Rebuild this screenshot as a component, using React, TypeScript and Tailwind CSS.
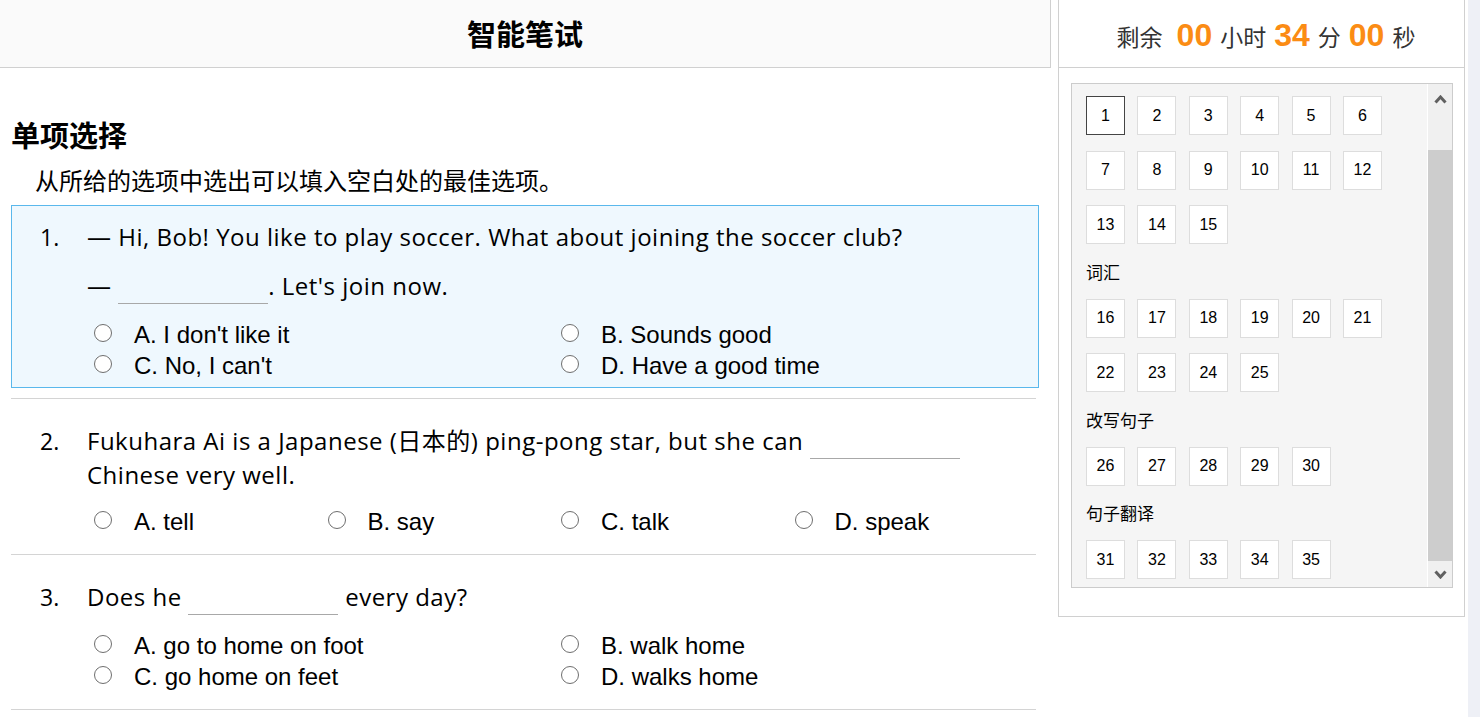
import React from "react";

type Opt = { label: string };

function Blank() {
  return <span className="relative top-[9px] inline-block w-[150px] h-px bg-[#a8a8a8]" />;
}

function Radio() {
  return <span className="inline-block w-[18px] h-[18px] mb-[3px] mr-[22px] shrink-0 rounded-full border border-[#6e6e6e] bg-white" />;
}

function Question({
  n,
  active,
  cols,
  options,
  optionsGap,
  children,
}: {
  n: number;
  active?: boolean;
  cols: 2 | 4;
  options: Opt[];
  optionsGap: string;
  children: React.ReactNode;
}) {
  return (
    <>
      <div
        className={
          active
            ? "border border-[#5ab8ec] bg-[#eff8fe] pl-[28px] pt-[14px] pb-[6px]"
            : "border border-transparent pl-[28px] pt-[14px] pb-[6px]"
        }
      >
        <div className="flex">
          <div className="w-[47px] shrink-0 text-[23px] leading-[34px] text-black font-['Open_Sans','Noto_Sans_CJK_SC',sans-serif]">
            {n}.
          </div>
          <div className="flex-1">
            <div className="text-[24px] leading-[34px] tracking-[0.5px] text-black font-['Open_Sans','Noto_Sans_CJK_SC',sans-serif]">
              {children}
            </div>
            <div
              className={
                (cols === 2 ? "grid grid-cols-2 " : "grid grid-cols-4 ") +
                optionsGap +
                " ml-[7px] w-[934px] font-['Liberation_Sans',Arial,sans-serif] text-[24px] leading-[31px] text-black"
              }
            >
              {options.map((o) => (
                <label key={o.label} className="flex items-center h-[31px]">
                  <Radio />
                  <span>{o.label}</span>
                </label>
              ))}
            </div>
          </div>
        </div>
      </div>
      <div className="my-[10px] w-[1025px] h-px bg-[#d4d4d4]" />
    </>
  );
}

const sections: { label: string | null; nums: number[] }[] = [
  { label: null, nums: Array.from({ length: 15 }, (_, i) => i + 1) },
  { label: "词汇", nums: Array.from({ length: 10 }, (_, i) => i + 16) },
  { label: "改写句子", nums: Array.from({ length: 5 }, (_, i) => i + 26) },
  { label: "句子翻译", nums: Array.from({ length: 5 }, (_, i) => i + 31) },
];

function Chevron({ up }: { up?: boolean }) {
  return (
    <svg width="13" height="9" viewBox="0 0 13 9">
      <polyline
        points={up ? "1.5,7.5 6.5,2 11.5,7.5" : "1.5,1.5 6.5,7 11.5,1.5"}
        fill="none"
        stroke="#606060"
        strokeWidth="3"
      />
    </svg>
  );
}

export default function App() {
  return (
    <div className="flex min-h-screen bg-white">
      <div className="w-[1051px] shrink-0">
        <header className="h-[68px] bg-[#fafafa] border-b border-r border-[#d0d0d0] flex items-center justify-center">
          <h1 className="text-[29px] font-bold text-black font-['Noto_Sans_CJK_SC',sans-serif]">智能笔试</h1>
        </header>
        <div className="pl-[11px] pr-[12px]">
          <h2 className="mt-[48px] text-[29px] leading-[36px] font-bold text-black font-['Noto_Sans_CJK_SC',sans-serif]">
            单项选择
          </h2>
          <p className="mt-[12px] pl-[24px] text-[24px] leading-[32px] text-black font-['Noto_Sans_CJK_SC',sans-serif]">
            从所给的选项中选出可以填入空白处的最佳选项。
          </p>
          <div className="mt-[9px]">
            <Question
              n={1}
              active
              cols={2}
              optionsGap="mt-[16px]"
              options={[
                { label: "A. I don't like it" },
                { label: "B. Sounds good" },
                { label: "C. No, I can't" },
                { label: "D. Have a good time" },
              ]}
            >
              <div>— Hi, Bob! You like to play soccer. What about joining the soccer club?</div>
              <div className="mt-[15px]">
                — <Blank />. Let's join now.
              </div>
            </Question>
            <Question
              n={2}
              cols={4}
              optionsGap="mt-[14px]"
              options={[{ label: "A. tell" }, { label: "B. say" }, { label: "C. talk" }, { label: "D. speak" }]}
            >
              Fukuhara Ai is a Japanese (日本的) ping-pong star, but she can <Blank />
              <br />
              Chinese very well.
            </Question>
            <Question
              n={3}
              cols={2}
              optionsGap="mt-[16px]"
              options={[
                { label: "A. go to home on foot" },
                { label: "B. walk home" },
                { label: "C. go home on feet" },
                { label: "D. walks home" },
              ]}
            >
              Does he <Blank /> every day?
            </Question>
          </div>
        </div>
      </div>

      <aside className="ml-[7px] w-[407px] h-[617px] shrink-0 border-l border-r border-b border-[#d0d0d0]">
        <div className="h-[68px] border-b border-[#d0d0d0] flex items-center justify-center pt-[3px] pl-[9px] font-['Noto_Sans_CJK_SC',sans-serif] text-[#333]">
          <div className="flex items-baseline">
            <span className="text-[23px]">剩余</span>
            <span className="ml-[14px] text-[32px] font-bold text-[#fb8c14] font-['Liberation_Sans',Arial,sans-serif]">00</span>
            <span className="ml-[8px] text-[23px]">小时</span>
            <span className="ml-[8px] text-[32px] font-bold text-[#fb8c14] font-['Liberation_Sans',Arial,sans-serif]">34</span>
            <span className="ml-[8px] text-[23px]">分</span>
            <span className="ml-[8px] text-[32px] font-bold text-[#fb8c14] font-['Liberation_Sans',Arial,sans-serif]">00</span>
            <span className="ml-[8px] text-[23px]">秒</span>
          </div>
        </div>
        <div className="mt-[15px] ml-[12px] mr-[11px] h-[505px] border border-[#cccccc] bg-[#f5f5f5] flex overflow-hidden">
          <div className="flex-1 pl-[14px] pt-[12px]">
            {sections.map((s, si) => (
              <div key={si}>
                {s.label && (
                  <div className="mt-[15.5px] mb-[15px] text-[17px] leading-[24px] text-black font-['Noto_Sans_CJK_SC',sans-serif]">
                    {s.label}
                  </div>
                )}
                <div className="grid grid-cols-[repeat(6,39px)] gap-x-[12.4px] gap-y-[15.5px]">
                  {s.nums.map((n) => (
                    <div
                      key={n}
                      className={
                        n === 1
                          ? "h-[39px] flex items-center justify-center bg-white border border-[#444] text-[16px] text-black font-['Liberation_Sans',Arial,sans-serif]"
                          : "h-[39px] flex items-center justify-center bg-white border border-[#dddddd] text-[16px] text-black font-['Liberation_Sans',Arial,sans-serif]"
                      }
                    >
                      {n}
                    </div>
                  ))}
                </div>
              </div>
            ))}
          </div>
          <div className="w-[25px] shrink-0 border-l border-white bg-[#f0f0f0] flex flex-col">
            <div className="h-[29px] flex items-center justify-center pt-[1px]">
              <Chevron up />
            </div>
            <div className="h-[37px]" />
            <div className="h-[411px] bg-[#cdcdcd]" />
            <div className="flex-1 flex items-center justify-center">
              <Chevron />
            </div>
          </div>
        </div>
      </aside>

      <div className="ml-auto w-[12px] bg-[#eef0f6]" />
    </div>
  );
}
